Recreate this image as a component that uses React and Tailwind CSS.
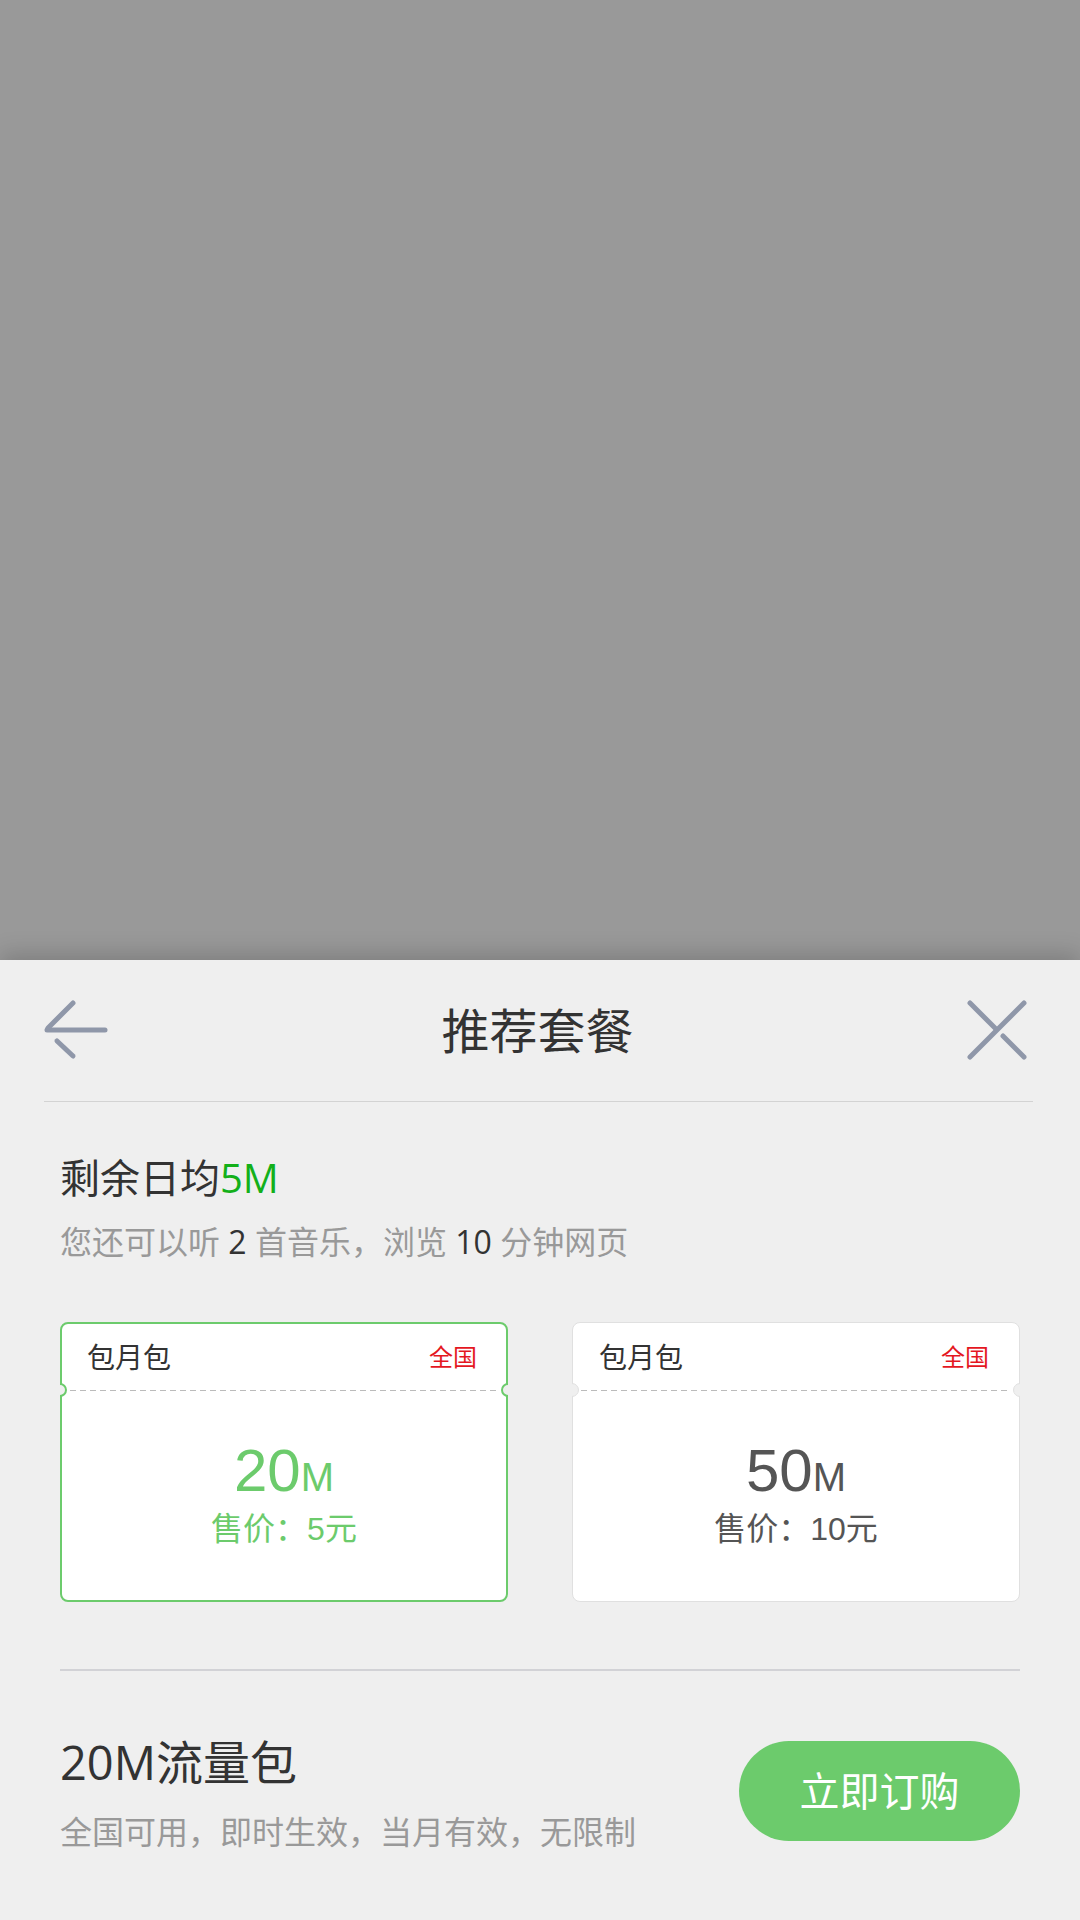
import React from "react";

const FONT = "font-['Open_Sans','Noto_Sans_CJK_SC',sans-serif]";

const BackIcon = () => (
  <svg width="64" height="60" viewBox="0 0 64 60" fill="none">
    <g stroke="#8f97a9" strokeWidth="5" strokeLinecap="round">
      <line x1="3" y1="30" x2="61" y2="30" />
      <line x1="29" y1="3" x2="4" y2="28" />
      <line x1="13" y1="41" x2="29" y2="56" />
    </g>
  </svg>
);

const CloseIcon = () => (
  <svg width="60" height="60" viewBox="0 0 60 60" fill="none">
    <g stroke="#8f97a9" strokeWidth="5" strokeLinecap="round">
      <line x1="57" y1="3" x2="3" y2="57" />
      <line x1="3" y1="3" x2="28" y2="28" />
      <line x1="36" y1="36" x2="57" y2="57" />
    </g>
  </svg>
);

const PlanCard = ({ size, price, active }) => {
  const cardCls = active
    ? "border-2 border-[#6ccb6c]"
    : "border border-[#e0e0e0]";
  const notchL = active
    ? "absolute left-[-7px] top-[61px] w-[14px] h-[14px] rounded-full bg-[#efefef] border-2 border-[#6ccb6c] [clip-path:inset(0_0_0_50%)]"
    : "absolute left-[-7px] top-[61px] w-[14px] h-[14px] rounded-full bg-[#efefef] border border-[#e0e0e0] [clip-path:inset(0_0_0_50%)]";
  const notchR = active
    ? "absolute right-[-7px] top-[61px] w-[14px] h-[14px] rounded-full bg-[#efefef] border-2 border-[#6ccb6c] [clip-path:inset(0_50%_0_0)]"
    : "absolute right-[-7px] top-[61px] w-[14px] h-[14px] rounded-full bg-[#efefef] border border-[#e0e0e0] [clip-path:inset(0_50%_0_0)]";
  const headCls = active
    ? "h-[66px] flex items-center justify-between pl-[25px] pr-[29px]"
    : "h-[67px] flex items-center justify-between pl-[26px] pr-[30px]";
  const numColor = active ? "text-[#6ccb6c]" : "text-[#555555]";

  return (
    <div className="relative">
      <div
        className={`w-[448px] h-[280px] bg-white rounded-[8px] flex flex-col ${cardCls}`}
      >
        <div className={headCls}>
          <span className="text-[28px] leading-none text-[#333333]">包月包</span>
          <span className="text-[24px] leading-none text-[#e4171f]">全国</span>
        </div>
        <div className="mx-[8px] h-px bg-[repeating-linear-gradient(90deg,#bbbbbb_0_6px,transparent_6px_10px)]" />
        <div className={`flex-1 flex flex-col items-center pt-[50px] ${numColor}`}>
          <div className="font-['Liberation_Sans',sans-serif] text-[60px] leading-none">
            {size}
            <span className="text-[40px]">M</span>
          </div>
          <div className="mt-[12px] text-[32px] leading-none font-['Liberation_Sans','Noto_Sans_CJK_SC',sans-serif]">
            售价：{price}元
          </div>
        </div>
      </div>
      <div className={notchL} />
      <div className={notchR} />
    </div>
  );
};

const App = () => {
  return (
    <div className={`w-[1080px] h-[1920px] overflow-hidden bg-[#999999] ${FONT}`}>
      <div className="h-[960px] bg-[#999999]" />

      <div className="relative h-[960px] bg-[#efefef] shadow-[0_-6px_22px_rgba(0,0,0,0.18)]">
        {/* header */}
        <div className="ml-[44px] mr-[47px] h-[142px] flex items-center justify-between border-b border-[#d3d3d3]">
          <div className="mt-[-2px]">
            <BackIcon />
          </div>
          <h1 className="text-[48px] leading-none text-[#333333] font-normal">推荐套餐</h1>
          <div className="mr-[6px] mt-[-2px]">
            <CloseIcon />
          </div>
        </div>

        <div className="pl-[60px] pr-[60px]">
          {/* remaining */}
          <div className="mt-[56px] text-[40px] leading-none text-[#333333]">
            剩余日均<span className="text-[#13b01a]">5M</span>
          </div>
          <div className="mt-[28px] text-[32px] leading-none text-[#999999]">
            您还可以听 <span className="text-[#333333]">2</span> 首音乐，浏览{" "}
            <span className="text-[#333333]">10</span> 分钟网页
          </div>

          {/* plans */}
          <div className="mt-[64px] flex justify-between">
            <PlanCard size="20" price="5" active />
            <PlanCard size="50" price="10" />
          </div>

          <div className="mt-[67px] border-t-2 border-[#d2d2d6]" />

          {/* selected */}
          <div className="mt-[68px] flex items-start justify-between">
            <div>
              <div className="text-[47px] leading-none text-[#333333]">20M流量包</div>
              <div className="mt-[30px] text-[32px] leading-none text-[#999999]">
                全国可用，即时生效，当月有效，无限制
              </div>
            </div>
            <button className="mt-[2px] w-[281px] h-[100px] rounded-full bg-[#6ccb6c] text-white text-[40px] leading-none">
              立即订购
            </button>
          </div>
        </div>
      </div>
    </div>
  );
};

export default App;
